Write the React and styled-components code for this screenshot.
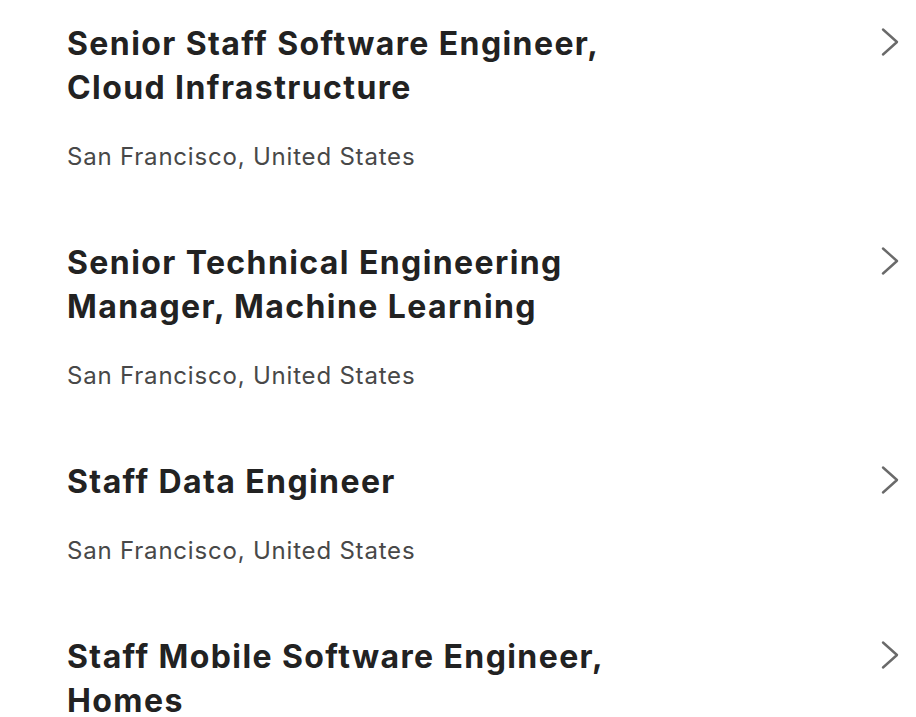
import styled, { createGlobalStyle } from 'styled-components';

const jobs = [
  { id: 1, title: 'Senior Staff Software Engineer, Cloud Infrastructure', location: 'San Francisco, United States' },
  { id: 2, title: 'Senior Technical Engineering Manager, Machine Learning', location: 'San Francisco, United States' },
  { id: 3, title: 'Staff Data Engineer', location: 'San Francisco, United States' },
  { id: 4, title: 'Staff Mobile Software Engineer, Homes', location: 'San Francisco, United States' },
];

const GlobalStyle = createGlobalStyle`
  body {
    margin: 0;
    background: #fff;
    font-family: Inter, 'Noto Sans', sans-serif;
  }
`;

const Chevron = () => (
  <svg width="20" height="30" viewBox="0 0 20 30" aria-hidden="true">
    <polyline
      points="3,2.5 17,15 3,27.5"
      fill="none"
      stroke="currentColor"
      strokeWidth="2.4"
      strokeLinecap="round"
      strokeLinejoin="round"
    />
  </svg>
);

const App = () => {
  return (
    <>
      <GlobalStyle />
      <JobList>
        {jobs.map((job) => {
          const { id, title, location } = job;
          return (
            <JobRow key={id}>
              <JobInfo>
                <Title>{title}</Title>
                <Location>{location}</Location>
              </JobInfo>
              <Arrow>
                <Chevron />
              </Arrow>
            </JobRow>
          );
        })}
      </JobList>
    </>
  );
};

const JobList = styled.ul`
  list-style: none;
  margin: 0;
  padding: 0 16px 0 67px;
  overflow: hidden;
  height: 717px;
`;

const JobRow = styled.li`
  display: flex;
  justify-content: space-between;
  align-items: flex-start;
  padding: 22px 0 46px;
`;

const JobInfo = styled.div`
  max-width: 575px;
`;

const Title = styled.h3`
  margin: 0;
  font-size: 32px;
  line-height: 44px;
  font-weight: 700;
  color: #222222;
  letter-spacing: 1.4px;
`;

const Location = styled.p`
  margin: 31px 0 0;
  font-size: 24px;
  line-height: 32px;
  font-weight: 400;
  color: #484848;
  letter-spacing: 0.8px;
`;

const Arrow = styled.span`
  display: flex;
  align-items: center;
  height: 40px;
  color: #6a6a6a;
`;

export default App;
